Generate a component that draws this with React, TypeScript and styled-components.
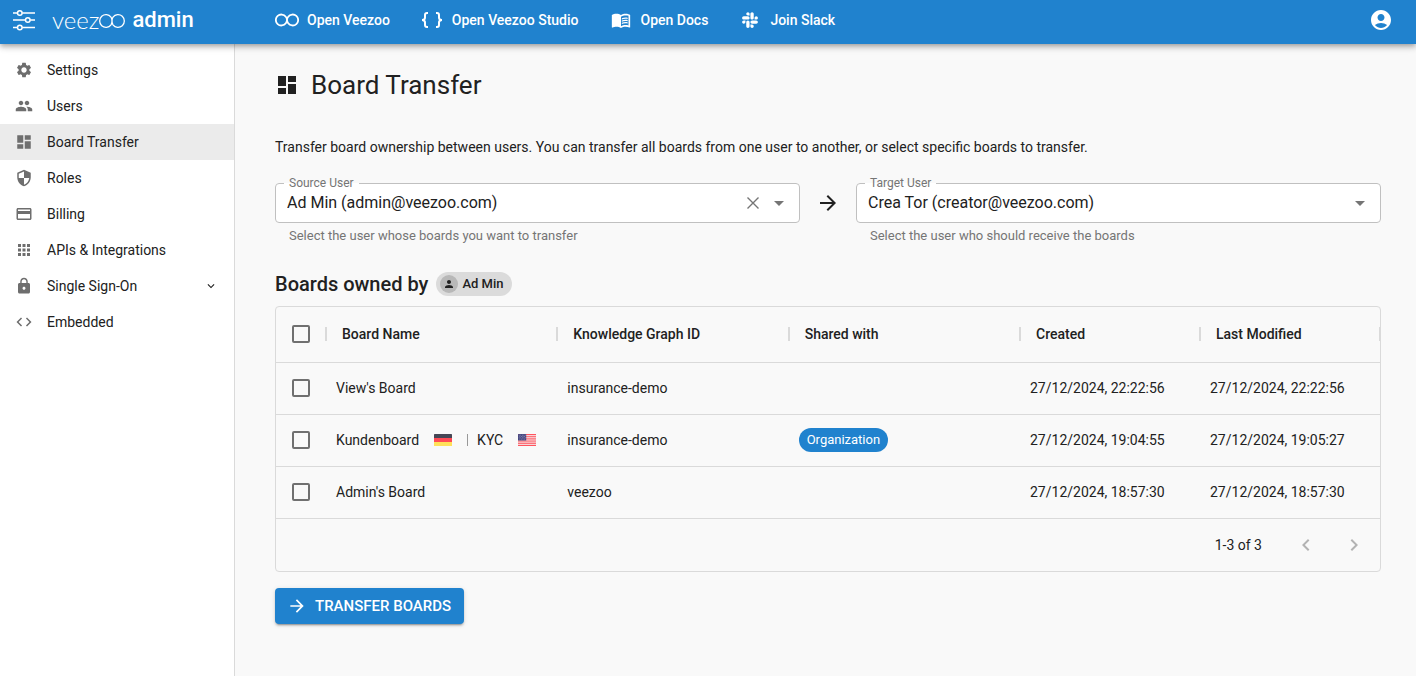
import React from "react";
import styled, { createGlobalStyle } from "styled-components";
import {
  MdAccountCircle,
  MdApps,
  MdArrowDropDown,
  MdArrowForward,
  MdChevronLeft,
  MdChevronRight,
  MdCode,
  MdCreditCard,
  MdDashboard,
  MdKeyboardArrowDown,
  MdLock,
  MdMenuBook,
  MdPeople,
  MdPerson,
  MdSecurity,
  MdSettings,
} from "react-icons/md";
import { FaSlack } from "react-icons/fa";

const color = {
  brand: "#2082ce",
  page: "#f9f9f9",
  paper: "#ffffff",
  text: "#212121",
  muted: "#757575",
  line: "#dadada",
  outline: "#c0c0c0",
};

const GlobalStyle = createGlobalStyle`
  *, *::before, *::after { box-sizing: border-box; }
  body {
    margin: 0;
    background: ${color.page};
    color: ${color.text};
    font-family: Roboto, "Liberation Sans", sans-serif;
    font-size: 14px;
    line-height: 20px;
  }
  button, select, input { font: inherit; color: inherit; }
  svg { display: block; flex-shrink: 0; }
`;

const Shell = styled.div`
  display: flex;
  flex-direction: column;
  min-height: 100vh;
`;

const TopBar = styled.header`
  position: relative;
  z-index: 1;
  display: flex;
  align-items: center;
  height: 44px;
  padding: 0 23px 4px 12px;
  background: ${color.brand};
  color: #fff;
  box-shadow: 0 2px 4px -1px rgba(0, 0, 0, 0.2), 0 4px 5px rgba(0, 0, 0, 0.14),
    0 1px 10px rgba(0, 0, 0, 0.12);
`;

const Brand = styled.a`
  display: flex;
  align-items: center;
  width: 263px;
  color: inherit;
  text-decoration: none;
`;

const Wordmark = styled.span`
  display: flex;
  align-items: center;
  margin-left: 16px;
  font-family: Lato, sans-serif;
  font-size: 24px;
  font-weight: 300;
  line-height: 24px;
`;

const BrandSuffix = styled.span`
  margin-left: 7px;
  font-size: 22px;
  font-weight: 500;
  line-height: 28px;
`;

const TopNav = styled.nav`
  display: flex;
  flex: 1;
  gap: 30px;
`;

const TopLink = styled.a`
  display: flex;
  align-items: center;
  gap: 8px;
  color: inherit;
  font-weight: 500;
  text-decoration: none;
`;

const IconSlot = styled.span`
  display: flex;
  justify-content: center;
  width: 24px;
`;

const IconButton = styled.button`
  display: flex;
  flex-shrink: 0;
  padding: 0;
  border: 0;
  background: none;
  cursor: pointer;
`;

const Body = styled.div`
  display: flex;
  flex: 1;
`;

const Sidebar = styled.nav`
  flex: 0 0 235px;
  padding-top: 8px;
  border-right: 1px solid ${color.line};
  background: ${color.paper};
`;

const SideLink = styled.a<{ $active?: boolean }>`
  display: flex;
  align-items: center;
  height: 36px;
  padding: 0 16px 0 15px;
  background: ${(p) => (p.$active ? "#ebebeb" : "transparent")};
  color: inherit;
  text-decoration: none;

  > svg:first-child {
    color: #6e6e6e;
  }
`;

const SideText = styled.span`
  flex: 1;
  margin-left: 14px;
`;

const Main = styled.main`
  flex: 1;
  min-width: 0;
  padding: 25px 35px 48px 40px;
`;

const Title = styled.h1`
  display: flex;
  align-items: center;
  gap: 12px;
  margin: 0;
  font-size: 26px;
  font-weight: 400;
  line-height: 32px;
`;

const Intro = styled.p`
  margin: 36px 0 20px;
`;

const TransferRow = styled.div`
  display: flex;
  gap: 16px;

  > svg {
    margin-top: 14px;
  }
`;

const FieldColumn = styled.div`
  flex: 1;
  min-width: 0;
`;

const Outline = styled.fieldset`
  display: block;
  min-width: 0;
  margin: 0;
  padding: 0 8px 5px 11px;
  border: 1px solid ${color.outline};
  border-radius: 4px;
  background: ${color.paper};
`;

const FieldLabel = styled.legend`
  margin-left: -3px;
  padding: 0 5px;
  color: ${color.muted};
  font-size: 12px;
  line-height: 12px;
`;

const Control = styled.div`
  display: flex;
  align-items: center;
  height: 28px;
  color: ${color.muted};
`;

const Select = styled.select`
  flex: 1;
  min-width: 0;
  height: 28px;
  padding: 0;
  border: 0;
  outline: 0;
  appearance: none;
  background: none;
  color: ${color.text};
  font-size: 16px;
`;

const Helper = styled.p`
  margin: 3px 14px 0;
  color: ${color.muted};
  font-size: 13px;
`;

const SectionTitle = styled.h2`
  display: flex;
  align-items: center;
  gap: 8px;
  margin: 25px 0 9px;
  font-size: 20px;
  font-weight: 500;
  line-height: 26px;
`;

const UserChip = styled.span`
  display: flex;
  align-items: center;
  gap: 4px;
  height: 24px;
  padding: 0 8px 0 4px;
  border-radius: 12px;
  background: #dbdbdb;
  font-size: 13px;
  line-height: 20px;
`;

const Avatar = styled.span`
  display: grid;
  place-items: center;
  width: 18px;
  height: 18px;
  border-radius: 50%;
  background: #b8b8b8;
`;

const Grid = styled.section`
  overflow: hidden;
  border: 1px solid ${color.line};
  border-radius: 4px;
`;

const Table = styled.table`
  width: 100%;
  border-spacing: 0;
  table-layout: fixed;
`;

const HeadCell = styled.th<{ $width?: number }>`
  width: ${(p) => (p.$width ? `${p.$width}px` : "auto")};
  height: 56px;
  padding: 0 0 2px 16px;
  border-bottom: 1px solid ${color.line};
  font-weight: 500;
  text-align: left;
`;

const HeadContent = styled.div`
  display: flex;
  align-items: center;
  justify-content: space-between;
  margin-right: -1px;

  &::after {
    content: "";
    width: 2px;
    height: 14px;
    background: ${color.line};
  }
`;

const Cell = styled.td<{ $tick?: boolean }>`
  height: 52px;
  padding: 0 0 2px ${(p) => (p.$tick ? 16 : 10)}px;
  border-bottom: 1px solid ${color.line};
  white-space: nowrap;
`;

const Tick = styled.input`
  display: block;
  width: 18px;
  height: 18px;
  margin: 0;
  border: 2px solid #707070;
  border-radius: 2px;
  appearance: none;

  &:checked {
    border-color: ${color.brand};
    background: ${color.brand};
  }
`;

const BoardName = styled.span`
  display: flex;
  align-items: center;
`;

const FlagSlot = styled.span`
  margin: 0 15px;
`;

const Divider = styled.span`
  width: 1px;
  height: 12px;
  margin-right: 9px;
  background: #999;
`;

const Tag = styled.span`
  display: inline-block;
  padding: 2px 8px;
  border-radius: 12px;
  background: ${color.brand};
  color: #fff;
  font-size: 13px;
`;

const Pager = styled.footer`
  display: flex;
  align-items: center;
  justify-content: flex-end;
  gap: 24px;
  height: 52px;
  padding-right: 14px;
`;

const PageButton = styled(IconButton)`
  color: #b3b3b3;
`;

const PageCount = styled.span`
  margin-right: 8px;
`;

const TransferButton = styled.button`
  display: flex;
  align-items: center;
  gap: 8px;
  height: 36px;
  margin-top: 16px;
  padding: 0 13px 0 12px;
  border: 0;
  border-radius: 4px;
  background: ${color.brand};
  color: #fff;
  font-size: 15px;
  font-weight: 500;
  text-transform: uppercase;
  cursor: pointer;
  box-shadow: 0 3px 1px -2px rgba(0, 0, 0, 0.2), 0 2px 2px rgba(0, 0, 0, 0.14),
    0 1px 5px rgba(0, 0, 0, 0.12);
`;

const SlidersIcon = () => (
  <svg width="24" height="24" viewBox="0 0 24 24" fill="none" stroke="#fff" strokeWidth="1.5" aria-hidden="true">
    <path d="M1 5h4.3M10.3 5H23M1 12h12.3M18.3 12H23M1 19.5h4.3M10.3 19.5H23" />
    <circle cx="7.8" cy="5" r="2.3" />
    <circle cx="15.8" cy="12" r="2.3" />
    <circle cx="7.8" cy="19.5" r="2.3" />
  </svg>
);

const InfinityIcon = ({ stroke = 1.8 }: { stroke?: number }) => (
  <svg width="24" height="14" viewBox="0 0 24 14" fill="none" stroke="#fff" strokeWidth={stroke} aria-hidden="true">
    <path d="M10.8 10.2A5.5 5.5 0 1 1 10.8 3.8Q12 5.3 12 7t1.2 3.2A5.5 5.5 0 1 0 13.2 3.8Q12 5.3 12 7t-1.2 3.2" />
  </svg>
);

const WordmarkRings = () => (
  <svg width="26" height="16" viewBox="0 0 26 16" fill="none" stroke="#fff" strokeWidth="1.3" aria-hidden="true">
    <path d="M12 12.8A6.3 6.3 0 1 1 12 5.2Q13 6.8 13 9t1 3.8A6.3 6.3 0 1 0 14 5.2Q13 6.8 13 9t-1 3.8" />
  </svg>
);

const BracesIcon = () => (
  <svg width="24" height="24" viewBox="0 0 24 24" fill="none" stroke="#fff" strokeWidth="2" aria-hidden="true">
    <path d="M8 5H7Q5 5 5 7v2.4Q5 12 2 12q3 0 3 2.6V17q0 2 2 2h1" />
    <path d="M16 5h1q2 0 2 2v2.4Q19 12 22 12q-3 0-3 2.6V17q0 2-2 2h-1" />
  </svg>
);

const ClearIcon = () => (
  <svg width="28" height="20" viewBox="0 0 28 20" stroke={color.muted} strokeWidth="1.4" aria-hidden="true">
    <path d="M8.5 4.5l11 11M19.5 4.5l-11 11" />
  </svg>
);

const GermanFlag = () => (
  <svg width="18" height="12" viewBox="0 0 18 12" role="img" aria-label="German">
    <path fill="#464655" d="M0 4V.6Q0 0 .6 0h16.8q.6 0 .6.6V4z" />
    <path fill="#ff4b55" d="M0 4h18v4H0z" />
    <path fill="#ffe15a" d="M0 8h18v3.4q0 .6-.6.6H.6Q0 12 0 11.4z" />
  </svg>
);

const AmericanFlag = () => (
  <svg width="18" height="12" viewBox="0 0 18 12" role="img" aria-label="English">
    <rect width="18" height="12" rx=".6" fill="#f5f5f5" />
    <path
      stroke="#ff4b55"
      strokeWidth=".95"
      d="M0 .5h18M0 2.3h18M0 4.2h18M0 6h18M0 7.9h18M0 9.7h18M0 11.5h18"
    />
    <path fill="#46467f" d="M0 .5Q0 0 .5 0h7.7v6.4H0z" />
    <path stroke="#a9a9cc" strokeWidth=".7" strokeDasharray=".7 .9" d="M.8 1.2h7M1.5 2.5h6M.8 3.8h7M1.5 5.1h6" />
  </svg>
);

const topLinks = [
  { label: "Open Veezoo", icon: <InfinityIcon /> },
  { label: "Open Veezoo Studio", icon: <BracesIcon /> },
  { label: "Open Docs", icon: <MdMenuBook size={20} /> },
  { label: "Join Slack", icon: <FaSlack size={18} /> },
];

const sideLinks = [
  { label: "Settings", Icon: MdSettings },
  { label: "Users", Icon: MdPeople },
  { label: "Board Transfer", Icon: MdDashboard, active: true },
  { label: "Roles", Icon: MdSecurity },
  { label: "Billing", Icon: MdCreditCard },
  { label: "APIs & Integrations", Icon: MdApps },
  { label: "Single Sign-On", Icon: MdLock, expandable: true },
  { label: "Embedded", Icon: MdCode },
];

const boards = [
  {
    id: "view",
    name: <>View's Board</>,
    label: "View's Board",
    graph: "insurance-demo",
    created: "27/12/2024, 22:22:56",
    modified: "27/12/2024, 22:22:56",
  },
  {
    id: "kunden",
    name: (
      <>
        Kundenboard
        <FlagSlot><GermanFlag /></FlagSlot>
        <Divider />
        KYC
        <FlagSlot><AmericanFlag /></FlagSlot>
      </>
    ),
    label: "Kundenboard",
    graph: "insurance-demo",
    shared: "Organization",
    created: "27/12/2024, 19:04:55",
    modified: "27/12/2024, 19:05:27",
  },
  {
    id: "admin",
    name: <>Admin's Board</>,
    label: "Admin's Board",
    graph: "veezoo",
    created: "27/12/2024, 18:57:30",
    modified: "27/12/2024, 18:57:30",
  },
];

type UserFieldProps = {
  id: string;
  label: string;
  value: string;
  helper: string;
  clearable?: boolean;
};

const UserField = ({ id, label, value, helper, clearable }: UserFieldProps) => (
  <FieldColumn>
    <Outline>
      <FieldLabel>
        <label htmlFor={id}>{label}</label>
      </FieldLabel>
      <Control>
        <Select id={id} defaultValue={value} aria-describedby={`${id}-helper`}>
          <option>{value}</option>
        </Select>
        {clearable && (
          <IconButton type="button" aria-label="Clear">
            <ClearIcon />
          </IconButton>
        )}
        <MdArrowDropDown size={24} />
      </Control>
    </Outline>
    <Helper id={`${id}-helper`}>{helper}</Helper>
  </FieldColumn>
);

export default function App() {
  return (
    <Shell>
      <GlobalStyle />
      <TopBar>
        <Brand href="#" aria-label="Veezoo admin">
          <SlidersIcon />
          <Wordmark>
            veez
            <WordmarkRings />
          </Wordmark>
          <BrandSuffix>admin</BrandSuffix>
        </Brand>
        <TopNav aria-label="Products">
          {topLinks.map(({ label, icon }) => (
            <TopLink key={label} href="#">
              <IconSlot>{icon}</IconSlot>
              {label}
            </TopLink>
          ))}
        </TopNav>
        <IconButton type="button" aria-label="Account">
          <MdAccountCircle size={24} color="#fff" />
        </IconButton>
      </TopBar>
      <Body>
        <Sidebar aria-label="Administration">
          {sideLinks.map(({ label, Icon, active, expandable }) => (
            <SideLink key={label} href="#" $active={active}>
              <Icon size={18} />
              <SideText>{label}</SideText>
              {expandable && <MdKeyboardArrowDown size={14} />}
            </SideLink>
          ))}
        </Sidebar>
        <Main>
          <Title>
            <MdDashboard size={24} />
            Board Transfer
          </Title>
          <Intro>
            Transfer board ownership between users. You can transfer all boards from one user to
            another, or select specific boards to transfer.
          </Intro>
          <TransferRow>
            <UserField
              id="source-user"
              label="Source User"
              value="Ad Min (admin@veezoo.com)"
              helper="Select the user whose boards you want to transfer"
              clearable
            />
            <MdArrowForward size={24} />
            <UserField
              id="target-user"
              label="Target User"
              value="Crea Tor (creator@veezoo.com)"
              helper="Select the user who should receive the boards"
            />
          </TransferRow>
          <SectionTitle>
            Boards owned by
            <UserChip>
              <Avatar>
                <MdPerson size={12} />
              </Avatar>
              Ad Min
            </UserChip>
          </SectionTitle>
          <Grid>
            <Table>
              <thead>
                <tr>
                  <HeadCell $width={50}>
                    <HeadContent>
                      <Tick type="checkbox" aria-label="Select all boards" />
                    </HeadContent>
                  </HeadCell>
                  <HeadCell><HeadContent>Board Name</HeadContent></HeadCell>
                  <HeadCell><HeadContent>Knowledge Graph ID</HeadContent></HeadCell>
                  <HeadCell><HeadContent>Shared with</HeadContent></HeadCell>
                  <HeadCell $width={180}><HeadContent>Created</HeadContent></HeadCell>
                  <HeadCell $width={180}><HeadContent>Last Modified</HeadContent></HeadCell>
                </tr>
              </thead>
              <tbody>
                {boards.map((board) => (
                  <tr key={board.id}>
                    <Cell $tick>
                      <Tick type="checkbox" aria-label={`Select ${board.label}`} />
                    </Cell>
                    <Cell><BoardName>{board.name}</BoardName></Cell>
                    <Cell>{board.graph}</Cell>
                    <Cell>{board.shared && <Tag>{board.shared}</Tag>}</Cell>
                    <Cell>{board.created}</Cell>
                    <Cell>{board.modified}</Cell>
                  </tr>
                ))}
              </tbody>
            </Table>
            <Pager>
              <PageCount>1-3 of 3</PageCount>
              <PageButton type="button" aria-label="Previous page">
                <MdChevronLeft size={24} />
              </PageButton>
              <PageButton type="button" aria-label="Next page">
                <MdChevronRight size={24} />
              </PageButton>
            </Pager>
          </Grid>
          <TransferButton type="button">
            <MdArrowForward size={20} />
            Transfer Boards
          </TransferButton>
        </Main>
      </Body>
    </Shell>
  );
}
